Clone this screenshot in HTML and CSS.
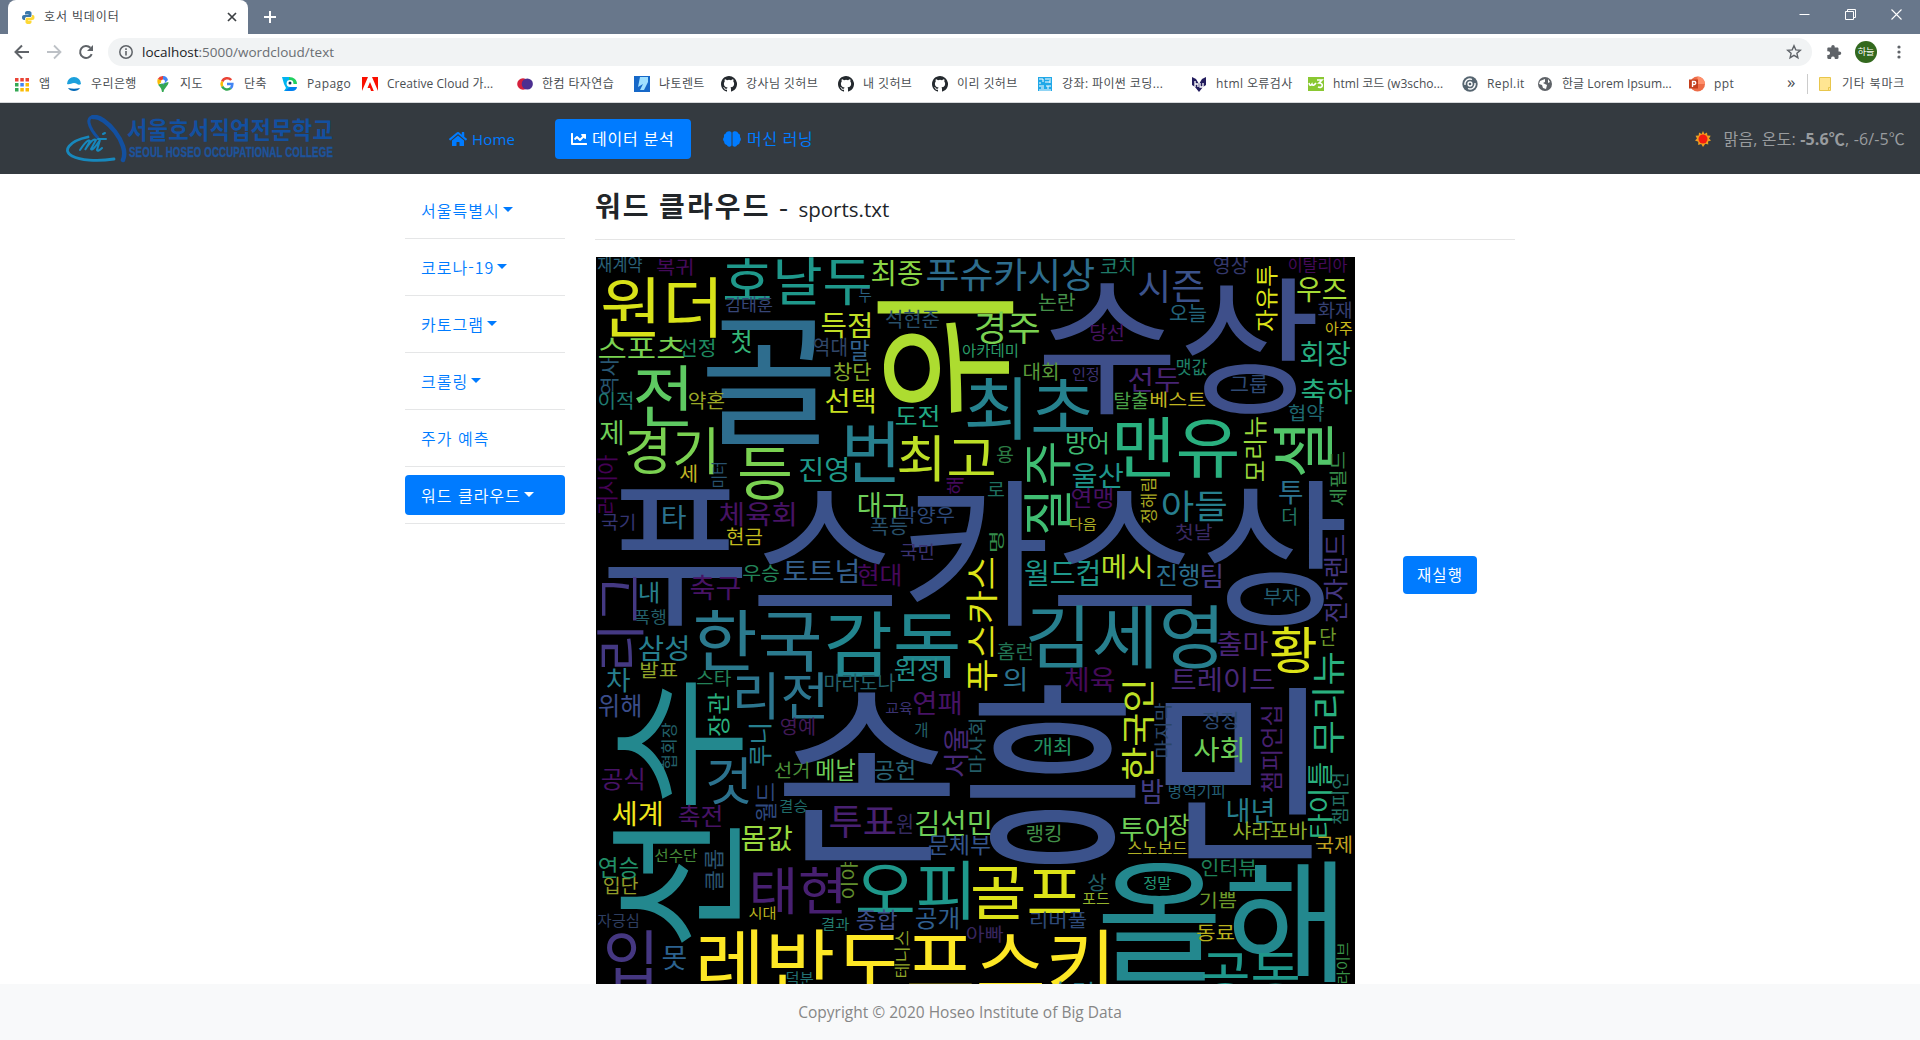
FILE: index.html
```html
<!DOCTYPE html>
<html lang="ko">
<head>
<meta charset="utf-8">
<title>호서 빅데이터</title>
<link rel="stylesheet" href="styles.css">
</head>
<body>
<svg width="0" height="0" class="defs">
  <symbol id="github" viewBox="0 0 16 16"><path fill="#24292e" d="M8 0C3.58 0 0 3.58 0 8c0 3.54 2.29 6.53 5.47 7.59.4.07.55-.17.55-.38v-1.49c-2.23.48-2.69-.95-2.69-.95-.36-.92-.89-1.17-.89-1.17-.73-.5.05-.49.05-.49.81.06 1.23.83 1.23.83.72 1.23 1.88.88 2.34.67.07-.52.28-.88.51-1.08-1.78-.2-3.65-.89-3.65-3.95 0-.87.31-1.59.82-2.15-.08-.2-.36-1.02.08-2.12 0 0 .67-.21 2.2.82a7.6 7.6 0 0 1 4 0c1.53-1.03 2.2-.82 2.2-.82.44 1.1.16 1.92.08 2.12.51.56.82 1.28.82 2.15 0 3.07-1.87 3.75-3.65 3.95.29.25.54.73.54 1.48v2.2c0 .21.15.46.55.38A8 8 0 0 0 8 0z"/></symbol>
</svg>
<div class="tabstrip">
  <div class="tab">
    <svg width="14" height="14" viewBox="0 0 14 14"><path fill="#3c78aa" d="M7 1c-2 0-3 .6-3 2v1.500h3.500V5H3C1.500 5 1 6 1 7.500S1.800 10 3 10h1V8.500C4 7.500 5 7 6 7h3c1 0 1.500-.7 1.500-1.500V3C10.500 1.500 9 1 7 1z"/><path fill="#fdd835" d="M7.500 14c2 0 3-.6 3-2v-1.500H7V10h4c1.600 0 2.500-.8 2.500-2.500S13 5 11.500 5H11v1c0 1.200-.8 1.800-2 1.800H6c-1 0-1.500.7-1.500 1.500V12c0 1.400 1 2 3 2z"/></svg>
    <span class="tab-title">호서 빅데이터</span>
    <svg class="tab-close" width="10" height="10" viewBox="0 0 10 10"><path d="M1 1l8 8M9 1l-8 8" stroke="#3c4043" stroke-width="1.7"/></svg>
  </div>
  <svg class="newtab" width="12" height="12" viewBox="0 0 12 12"><path d="M6 0v12M0 6h12" stroke="#fff" stroke-width="2"/></svg>
  <div class="winbtns">
    <svg width="11" height="11" viewBox="0 0 11 11"><path d="M.5 5.500h10" stroke="#fff"/></svg>
    <svg width="11" height="11" viewBox="0 0 11 11"><path d="M2.500 2.500v-2h8v8h-2M.5 2.500h8v8h-8z" fill="none" stroke="#fff"/></svg>
    <svg width="11" height="11" viewBox="0 0 11 11"><path d="M.5.5l10 10M10.500.5l-10 10" stroke="#fff" stroke-width="1.100"/></svg>
  </div>
</div>
<div class="toolbar">
  <div class="navbtns">
    <svg width="16" height="16" viewBox="0 0 16 16"><path d="M15 8H2M8 1.500L1.500 8 8 14.500" fill="none" stroke="#5f6368" stroke-width="2"/></svg>
    <svg width="16" height="16" viewBox="0 0 16 16"><path d="M1 8h13M8 1.500L14.500 8 8 14.500" fill="none" stroke="#bdc1c6" stroke-width="1.800"/></svg>
    <svg width="16" height="16" viewBox="0 0 16 16"><path d="M13.700 10.200A6 6 0 1 1 12.400 3.800" fill="none" stroke="#5f6368" stroke-width="2"/><path d="M15 1v6H9z" fill="#5f6368"/></svg>
  </div>
  <div class="url">
    <svg width="14" height="14" viewBox="0 0 14 14"><circle cx="7" cy="7" r="6.200" fill="none" stroke="#5f6368" stroke-width="1.500"/><path d="M7 6v4.500M7 3.300v1.600" stroke="#5f6368" stroke-width="1.600"/></svg>
    <span class="addr">localhost<span class="path">:5000/wordcloud/text</span></span>
    <svg width="16" height="16" viewBox="0 0 16 16"><path d="M8 1.800l1.800 4.100 4.500.4-3.400 3 1 4.400L8 11.400l-3.900 2.300 1-4.400-3.400-3 4.500-.4z" fill="none" stroke="#5f6368" stroke-width="1.400"/></svg>
  </div>
  <svg class="ext" width="16" height="16" viewBox="0 0 16 16"><path fill="#5f6368" d="M13.500 7.500h-1V4.700c0-.7-.6-1.200-1.200-1.200H8.700V2.600a1.700 1.700 0 0 0-3.400 0v.9H2.500c-.7 0-1.200.5-1.200 1.200v2.500h.9a1.900 1.900 0 0 1 0 3.800h-.9v2.700c0 .7.500 1.200 1.200 1.200h2.600v-.9a1.900 1.900 0 0 1 3.700 0v.9h2.500c.7 0 1.200-.5 1.200-1.200V11h1a1.750 1.750 0 0 0 0-3.500z"/></svg>
  <span class="avatar">하늘</span>
  <svg class="dots" width="4" height="14" viewBox="0 0 4 14" fill="#5f6368"><circle cx="2" cy="2" r="1.600"/><circle cx="2" cy="7" r="1.600"/><circle cx="2" cy="12" r="1.600"/></svg>
</div>
<div class="bookmarks">
  <div class="marks">
    <span class="bm"><svg viewBox="0 0 16 16"><g fill="#ea4335"><path d="M1 2h3.500v3.500H1z"/><path d="M6.300 2h3.500v3.500H6.300zM11.500 2H15v3.500h-3.500z"/></g><path fill="#34a853" d="M1 7h3.500v3.500H1zM1 12h3.500v3.500H1z"/><path fill="#4285f4" d="M6.300 7h3.500v3.500H6.300z"/><path fill="#fbbc05" d="M11.500 7H15v3.500h-3.500zM6.300 12h3.500v3.500H6.300zM11.500 12H15v3.500h-3.500z"/></svg>앱</span>
    <span class="bm"><svg viewBox="0 0 16 16"><path fill="#1ca0dc" d="M1 8a7 7 0 0 1 14 0c-3 2-4-1-7-1S4 9 1 8z"/><path fill="#0068b7" d="M2 12c4 1 8 1 12 0-2 4-10 4-12 0z"/></svg>우리은행</span>
    <span class="bm"><svg viewBox="0 0 16 16"><path fill="#34a853" d="M3 8.500C5 11 6.500 12 7 16h1.500c.5-4 5-6 5-10z"/><path fill="#4285f4" d="M7 0a5.500 5.500 0 0 1 6 4L8 9z"/><path fill="#ea4335" d="M8 0a6 6 0 0 0-5.300 3L8 6z"/><path fill="#fbbc05" d="M2.700 3c-.6 2-.4 4 .5 5.700L8 5z"/><circle cx="8" cy="5.500" r="2" fill="#fff"/></svg>지도</span>
    <span class="bm"><svg viewBox="0 0 16 16" fill="none" stroke-width="2.600"><path stroke="#ea4335" d="M12.200 4A5.400 5.400 0 0 0 3.200 5.500"/><path stroke="#fbbc05" d="M3.200 5.500a5.400 5.400 0 0 0 0 5"/><path stroke="#34a853" d="M3.200 10.500a5.400 5.400 0 0 0 8.500 1.600"/><path stroke="#4285f4" d="M8 8h5.300c0 2-.5 3.200-1.600 4.200"/></svg>단축</span>
    <span class="bm"><svg viewBox="0 0 16 16"><path fill="#00b4f0" d="M0 1h8v14H2l2-3-2-4z"/><path fill="#20d060" d="M7 1c5 0 8 3 8 7h-4c-3 0-4-3-4-7z"/><path fill="#0080f0" d="M3 15h7c3 0 5-2 5-4H8z"/><circle cx="8" cy="7.500" r="3.400" fill="#fff"/><circle cx="8" cy="7" r="1.500" fill="#07345a"/></svg>Papago</span>
    <span class="bm"><svg viewBox="0 0 16 16"><path fill="#fa0f00" d="M0 1h6L0 15zM16 1h-6l6 14zM8 6l3.800 9H9l-1-3H5.500z"/></svg>Creative Cloud 가...</span>
    <span class="bm"><svg viewBox="0 0 16 16"><circle cx="6" cy="8" r="5.800" fill="#d5203c"/><circle cx="10.300" cy="8" r="5.600" fill="#4c2f91"/></svg>한컴 타자연습</span>
    <span class="bm"><svg viewBox="0 0 16 16"><path fill="#1668c8" d="M0 0h16v16H0z"/><path fill="#9fe0ff" d="M6 1l8 0v5l-4 8H6l3-6-5 3z"/></svg>냐토렌트</span>
    <span class="bm"><svg><use href="#github"/></svg>강사님 깃허브</span>
    <span class="bm"><svg><use href="#github"/></svg>내 깃허브</span>
    <span class="bm"><svg><use href="#github"/></svg>이리 깃허브</span>
    <span class="bm"><svg viewBox="0 0 16 16"><path fill="#20a8e8" d="M1 1h14v14H1z"/><path d="M2 3h4v3M3 6v2M8 3h4M8 6h5M13 2v5M2 10h5M4 12h3M9 10h5M11 10v3M2 14h12" stroke="#fff" fill="none"/></svg>강좌: 파이썬 코딩...</span>
    <span class="bm"><svg viewBox="0 0 16 16"><path fill="#241d5e" d="M1 1l4 2 3 5 3-5 4-2v8l-3 2-4 5-4-5-3-2z"/><path d="M4 5v6M4 8h3v3M9 7v4h3V7" fill="none" stroke="#fff" stroke-width="1.300"/></svg>html 오류검사</span>
    <span class="bm"><svg viewBox="0 0 16 16"><path fill="#8ac832" d="M0 1h16v14H0z"/><path d="M1 7q1 4 3 1 1 3 4-1M9 4h5l-3 3c5 0 4 6-1 4" fill="none" stroke="#fff" stroke-width="1.600"/></svg>html 코드 (w3scho...</span>
    <span class="bm"><svg viewBox="0 0 16 16"><circle cx="8" cy="8" r="7.700" fill="#566570"/><circle cx="8" cy="8" r="2" fill="none" stroke="#fff" stroke-width="1.300"/><path d="M3 9a5 5 0 0 1 7-5.500M13 7a5 5 0 0 1-7 5.500" fill="none" stroke="#fff" stroke-width="1.300"/></svg>Repl.it</span>
    <span class="bm"><svg viewBox="0 0 16 16"><circle cx="8" cy="8" r="7" fill="#5f6368"/><path fill="#fff" d="M3 5l5-2v3L6 7l4 2-1 4-3-1-1-3-3-1zM11 3l2 3-2 1z"/></svg>한글 Lorem Ipsum...</span>
    <span class="bm"><svg viewBox="0 0 16 16"><circle cx="8.500" cy="8" r="7.500" fill="#ed6c47"/><path fill="#ff8f6b" d="M8.500.5A7.500 7.500 0 0 1 16 8H8.500z"/><path fill="#c43e1c" d="M0 3.500h9v9H0z"/><path d="M3.500 11V5.500h1.800a1.500 1.500 0 0 1 0 3H3.500" fill="none" stroke="#fff" stroke-width="1.300"/></svg>ppt</span>
  </div>
  <span class="more">»</span>
  <span class="bm other"><svg viewBox="0 0 16 16"><path d="M2.500 1.500h11v13h-11z" fill="#ffe592" stroke="#e8c64c"/><path d="M11.500 14.500v-3h2" fill="none" stroke="#e8c64c"/></svg>기타 북마크</span>
</div>

<nav class="navbar">
  <svg class="logo" width="268" height="48" viewBox="0 0 268 48">
    <g fill="none" stroke-linecap="round"><path d="M32 23C22 12 20 2 27 2" stroke="#1350a0" stroke-width="3"/><path d="M27 2c12-2 37 27 30 43" stroke="#1350a0" stroke-width="4.500"/><path d="M22 22C3 26-4 36 6 41c8 4 24 6 42 3" stroke="#1788bd" stroke-width="2.800"/><path d="M14 35q8-12 10-9l-5 9q8-13 11-10l-5 9q1 3 9-9l-3 10q1 2 5-2M32 24h8M37 19l2-1" stroke="#1788bd" stroke-width="2"/></g>
    <text class="logo-ko" x="61" y="24" textLength="206" lengthAdjust="spacingAndGlyphs">서울호서직업전문학교</text>
    <text class="logo-en" x="63" y="42" textLength="204" lengthAdjust="spacingAndGlyphs">SEOUL HOSEO OCCUPATIONAL COLLEGE</text>
  </svg>
  <a class="nav home"><svg width="18" height="16" viewBox="0 0 576 512"><path fill="currentColor" d="M280 148L96 300v164a16 16 0 0 0 16 16h112a16 16 0 0 0 16-16v-96a16 16 0 0 1 16-16h64a16 16 0 0 1 16 16v96a16 16 0 0 0 16 16h112a16 16 0 0 0 16-16V300L296 148a12 12 0 0 0-16 0zM572 251l-84-69V44a12 12 0 0 0-12-12h-56a12 12 0 0 0-12 12v72l-90-74a48 48 0 0 0-61 0L4 251a12 12 0 0 0-1 17l25 31a12 12 0 0 0 17 2l235-194a12 12 0 0 1 16 0l235 194a12 12 0 0 0 17-2l25-31a12 12 0 0 0-1-17z"/></svg>Home</a>
  <a class="nav active"><svg width="16" height="16" viewBox="0 0 512 512"><path fill="currentColor" d="M496 384H64V80a16 16 0 0 0-16-16H16A16 16 0 0 0 0 80v336a32 32 0 0 0 32 32h464a16 16 0 0 0 16-16v-32a16 16 0 0 0-16-16zM464 96H346c-22 0-32 26-17 41l32 32-73 73-73-73a32 32 0 0 0-46 0l-68 68a16 16 0 0 0 0 23l23 22a16 16 0 0 0 22 0l46-45 73 73a32 32 0 0 0 46 0l96-96 32 32c15 15 41 5 41-17V112a16 16 0 0 0-16-16z"/></svg>데이터 분석</a>
  <a class="nav ml"><svg width="18" height="16" viewBox="0 0 18 16"><path fill="currentColor" d="M8.500 1.500v13C7 16.300 4.500 16 4 14 1.500 13.500 1 12 1.300 10.700-.3 9.500-.2 7 1.100 6 .5 4.300 1.500 3 2.800 2.600 3.300.2 7-.5 8.500 1.500zM9.500 1.500v13c1.500 1.800 4 1.500 4.500-.5 2.500-.5 3-2 2.700-3.300C18.300 9.500 18.200 7 16.900 6c.6-1.700-.4-3-1.700-3.400C14.700.2 11 -.5 9.500 1.500z"/></svg>머신 러닝</a>
  <div class="weather"><svg width="16" height="16" viewBox="0 0 16 16"><path fill="#f0a020" d="M8 0l1.400 3L12 1.500l.4 3.100 3.300.1L14 7.500l2 2-3 1 .3 3-3-.7L8 16l-1.800-3-3 1 .1-3.300L0 9.500l2-2L.5 4.800l3.200-.2L4 1.500 6.600 3z"/><circle cx="8" cy="8" r="4.500" fill="#f41c10"/></svg><span>맑음, 온도: <b>-5.6℃</b>, -6/-5℃</span></div>
</nav>

<main class="content">
  <aside class="side">
    <div class="item"><a class="caret">서울특별시</a></div>
    <div class="item"><a class="caret">코로나-19</a></div>
    <div class="item"><a class="caret">카토그램</a></div>
    <div class="item"><a class="caret">크롤링</a></div>
    <div class="item"><a>주가 예측</a></div>
    <div class="item"><a class="caret current">워드 클라우드</a></div>
  </aside>
  <section class="panel">
    <h3>워드 클라우드 <span class="dash">-</span> <small>sports.txt</small></h3>
    <div class="row">
      <svg class="cloud" id="cloud" width="759" height="759" viewBox="0 0 759 759"></svg>
      <button class="rerun">재실행</button>
    </div>
  </section>
</main>
<footer>Copyright © 2020 Hoseo Institute of Big Data</footer>
<script src="cloud.js"></script>
</body>
</html>
```
FILE: styles.css
```css
* { box-sizing: border-box; }
body {
  margin: 0;
  height: 1040px;
  overflow: hidden;
  display: flex;
  flex-direction: column;
  background: #fff;
  color: #212529;
  font: 300 16px/24px "Open Sans", "Noto Sans CJK KR", sans-serif;
}
svg { display: block; flex: none; }
.defs { position: absolute; }

.tabstrip { flex: none; height: 34px; background: #68778b; display: flex; align-items: center; padding-left: 8px; }
.tab { width: 240px; height: 34px; background: #fff; border-radius: 8px 8px 0 0; display: flex; align-items: center; padding: 0 11px 0 13px; font-size: 12px; font-weight: 400; color: #45494d; }
.tab-title { margin-left: 9px; letter-spacing: .9px; flex: 1; }
.newtab { margin-left: 16px; }
.winbtns { margin-left: auto; display: flex; gap: 35px; padding-right: 18px; margin-top: -6px; }

.toolbar { flex: none; height: 36px; display: flex; align-items: center; }
.navbtns { display: flex; gap: 16px; width: 108px; padding-left: 14px; }
.url { width: 1704px; height: 28px; border-radius: 14px; background: #f1f3f4; display: flex; align-items: center; padding: 0 10px 0 11px; }
.addr { flex: 1; margin-left: 9px; font-size: 13.500px; font-weight: 400; color: #202124; }
.path { color: #6a6e73; }
.ext { margin-left: 14px; }
.avatar { width: 22px; height: 22px; border-radius: 50%; background: #33691e; color: #fff; font-size: 9px; line-height: 21px; text-align: center; margin-left: 13px; font-weight: 400; }
.dots { margin-left: 20px; }

.bookmarks { flex: none; height: 33px; border-bottom: 1px solid #d5d7da; display: flex; align-items: center; padding: 0 0 5px 14px; font-size: 12px; font-weight: 400; color: #4a4e52; }
.marks { display: grid; width: 1773px; grid-template-columns: 52px 89px 64px 63px 80px 155px 117px 87px 117px 94px 105px 154px 117px 154px 75px 152px 60px; }
.bm { display: flex; align-items: center; white-space: pre; letter-spacing: .4px; }
.bm svg { width: 16px; height: 16px; margin-right: 9px; }
.bm:nth-child(6), .bm:nth-child(14), .bm:nth-child(16) { letter-spacing: .05px; }
.more { width: 20px; font-size: 17px; margin-top: -3px; }
.other { border-left: 1px solid #ccc; padding-left: 9px; height: 20px; letter-spacing: .8px; }

.navbar { flex: none; height: 71px; background: #343a40; display: flex; align-items: center; color: #007bff; letter-spacing: .2px; }
.logo { margin-left: 66px; }
.logo-ko { font: 700 24px "Noto Sans CJK KR", sans-serif; fill: #1350a0; }
.logo-en { font: 700 14px "Liberation Sans", sans-serif; fill: #1e539b; stroke: #1e539b; stroke-width: .4px; }
.nav { display: flex; align-items: center; gap: 5px; font-weight: 400; font-size: 15px; }
.nav.home { margin-left: 115px; width: 106px; }
.nav.active { width: 136px; height: 40px; border-radius: 4px; background: #007bff; color: #fff; padding-left: 16px; gap: 5px; font-weight: 400; font-size: 16px; letter-spacing: .8px; }
.nav.ml { margin-left: 32px; gap: 6px; font-size: 16px; letter-spacing: .7px; }
.weather { margin-left: auto; padding-right: 15px; display: flex; align-items: center; gap: 13px; color: #999c9f; font-weight: 400; font-size: 16px; letter-spacing: .15px; }
.weather b { font-weight: 700; }

.content { flex: 1; min-height: 0; display: flex; padding-left: 405px; gap: 30px; }
.side { width: 160px; padding-top: 8px; }
.item { height: 57px; padding-top: 8px; border-bottom: 1px solid #e5e6e7; }
.item a { display: flex; align-items: center; height: 40px; padding: 0 0 1px 16px; border-radius: 4px; color: #007bff; font-family: "Noto Sans CJK KR", sans-serif; font-size: 16px; letter-spacing: 1px; font-weight: 350; }
.item .current { background: #007bff; color: #fff; }
.caret::after { content: ""; margin-left: 3px; border: 5px solid transparent; border-top-color: currentColor; border-bottom: 0; }
.panel { width: 920px; }
h3 { margin: 0 0 17px; height: 66px; border-bottom: 1px solid #e5e5e5; font-size: 28px; line-height: 65px; font-weight: 700; letter-spacing: 2.100px; white-space: pre; word-spacing: -1px; }
h3 .dash { font-weight: 400; }
h3 small { font-size: 20.500px; font-weight: 400; letter-spacing: 0; }
.row { display: flex; padding-left: 1px; }
.cloud { background: #000; font: 400 100px "Noto Sans CJK KR", sans-serif; }
.rerun { margin: 299px 0 0 48px; width: 74px; height: 38px; border: 0; border-radius: 4px; background: #007bff; color: #fff; font: 400 15.500px "Noto Sans CJK KR", sans-serif; letter-spacing: 1px; padding: 0 0 2px; }
footer { flex: none; height: 56px; background: #f8f9fa; color: #868686; text-align: center; line-height: 56px; font-weight: 400; font-size: 15.500px; position: relative; }
```
FILE: cloud.js
```js
// word, left, top, right, bottom of the inked area, colour, 1 = turned upwards
const words = [
['재계약',2,0,46,16,'#2a6078'],['복귀',61,2,96,19,'#440a5a'],['원더',7,20,120,81,'#d8e219'],['호날두',129,0,274,48,'#1f988b'],
['최종',276,4,326,30,'#8bd646'],['푸슈카시상',331,1,498,34,'#2e6d8e'],['두',263,31,275,45,'#2b6080'],['김태훈',130,40,176,56,'#374677'],
['골',111,62,235,187,'#2e6d8e'],['득점',226,56,274,82,'#c0df25'],['위',280,43,418,157,'#addc30',1],['스포츠',3,80,88,101,'#7ad151'],
['선정',84,82,118,101,'#1f8a60'],['첫',136,73,155,96,'#35b779'],['역대',218,81,250,100,'#304668'],['말',255,83,273,104,'#33638d'],
['석현준',290,53,343,72,'#29506a'],['역사',5,101,23,137,'#285672',1],['전',40,108,92,169,'#5ec962'],['창단',238,106,275,125,'#86a82a'],
['이적',3,135,36,153,'#1f7a70'],['약혼',93,135,128,153,'#9aa826'],['선택',230,131,278,156,'#c8e020'],['도전',300,148,342,169,'#22a884'],
['제',4,163,26,188,'#6ece58'],['경기',31,170,118,218,'#7ad151'],['세',84,208,100,226,'#c2b424'],['미터',115,206,130,230,'#28526e',1],
['등',144,191,194,243,'#7ad151'],['진영',204,200,251,225,'#1f9a8a'],['번',251,164,299,225,'#277f8e'],['최고',303,178,398,225,'#bddf26'],
['러시아',1,198,21,256,'#440154',1],['해',351,221,368,237,'#440a5a',1],['코치',505,1,538,19,'#1f7a68'],['시즌',543,13,607,46,'#3b528b'],
['수상',448,20,720,158,'#3e4f8a'],['영상',618,0,652,18,'#34386c'],['자유투',660,9,681,74,'#dde318',1],['이탈리아',693,0,751,15,'#440a5a'],
['우즈',701,21,750,46,'#a5db36'],['화재',722,45,755,62,'#343f70'],['아주',730,64,756,78,'#c8b81c'],['논란',443,36,479,54,'#45904a'],
['경주',380,55,443,87,'#7ad151'],['당선',495,67,527,85,'#471360'],['오늘',574,47,610,65,'#23647a'],['아카데미',367,86,421,100,'#2a9c68'],
['회장',705,84,754,109,'#28ae80'],['대회',428,106,461,124,'#5a9a3a'],['인정',477,110,502,124,'#3c3272'],['선두',533,110,583,135,'#482475'],
['맷값',581,101,611,118,'#1f8068'],['그룹',635,118,671,136,'#2f4a74'],['축하',706,122,756,147,'#28ae80'],['최초',371,120,497,183,'#26828e'],
['탈출',519,135,552,153,'#4aa048'],['베스트',555,135,609,151,'#c0b420'],['협약',693,148,728,165,'#1f6a72'],['맨유',521,160,641,221,'#2ab07f'],
['모리뉴',648,160,670,224,'#9bd93c',1],['셜',677,169,735,218,'#52c569',1],['방어',471,175,511,197,'#3fbc73'],['용',401,190,417,207,'#2c7c44'],
['울산',477,206,527,231,'#1f958b'],['질주',428,186,474,276,'#40bd72',1],['로',392,225,408,239,'#1f7060'],['연맹',476,231,516,251,'#471063'],
['정해림',545,222,561,266,'#a8a822',1],['아들',567,233,630,265,'#277f8e'],['투',683,224,706,247,'#2c728e'],['셰필드',734,195,751,249,'#358a48',1],
['푸스카스상',11,222,749,370,'#3b528b'],['국기',6,257,38,274,'#343470'],['타',67,248,90,272,'#2c728e'],['체육회',124,245,198,269,'#471365'],
['현금',131,270,166,288,'#c0b81e'],['대구',263,236,310,262,'#6ece58'],['박양우',303,250,358,267,'#2c4878'],['폭등',275,261,311,279,'#28506a'],
['국민',305,287,337,304,'#3a3270'],['우승',147,308,183,325,'#238458'],['토트넘',188,302,261,326,'#35608d'],['현대',262,307,304,329,'#46085c'],
['리그',1,320,47,410,'#443983',1],['내',44,325,62,346,'#277f8e'],['축구',95,318,144,343,'#471365'],['폭행',39,352,69,367,'#235e68'],
['한국',100,353,223,415,'#2b7a8e'],['감독',231,353,362,420,'#22858e'],['삼성',43,378,91,404,'#277f8e'],['발표',45,404,81,421,'#90a42a'],
['차',11,411,34,435,'#277f8e'],['스타',101,413,135,430,'#238058'],['원정',299,401,341,424,'#22918c'],['마라도나',229,417,299,435,'#23606a'],
['리전',141,415,228,463,'#2c758e'],['위해',3,437,44,460,'#3b4d8a'],['장관',112,436,133,479,'#2ab07f',1],['협회장',65,466,80,512,'#23606a',1],
['루니',153,468,175,509,'#277f8e',1],['영예',185,461,218,479,'#421a58'],['교육',290,445,316,457,'#3a3270'],['연패',318,434,364,458,'#471365'],
['개',319,465,331,480,'#236068'],['마사회',373,463,390,515,'#235c66',1],['서울',348,471,372,520,'#482878',1],['손흥민',188,427,716,610,'#3b528b'],
['푸스카스',370,301,401,434,'#dde318',1],['선수',16,425,148,686,'#23888e',1],['다음',474,260,500,273,'#acac24'],['첫날',580,266,616,283,'#3a2a64'],
['더',687,251,700,269,'#237462'],['명',393,276,407,294,'#348a4a',1],['월드컵',429,303,502,329,'#1f988b'],['메시',507,297,554,322,'#b5de2b'],
['진행',561,307,602,329,'#2c6f8e'],['팀',606,307,625,331,'#443983'],['부자',668,331,704,349,'#235e70'],['전자랜드',728,278,751,365,'#453781',1],
['김세영',433,348,621,412,'#277f8e'],['홈런',402,385,436,403,'#227454'],['출마',622,374,672,399,'#482475'],['황',675,370,720,416,'#dde318'],
['단',725,371,740,389,'#6c982a'],['무리뉴',716,396,748,496,'#2ab07f',1],['의',408,410,429,434,'#2c728e'],['체육',469,410,518,435,'#440a5a'],
['트레이드',576,410,678,435,'#482878'],['한국인',526,425,558,522,'#bddf26',1],['마지막',559,446,576,500,'#2b4668',1],['정정',607,455,641,473,'#2e4a72'],
['챔피언십',665,450,686,535,'#482070',1],['개최',438,481,474,499,'#229060'],['사회',598,480,646,505,'#6ece58'],['밤',546,522,567,547,'#433e85'],
['병역기피',573,527,628,541,'#235e74'],['타이틀',712,506,736,580,'#2ab07f',1],['챔피언',736,517,753,567,'#237064',1],['내년',632,541,677,566,'#277f8e'],
['샤라포바',637,565,711,583,'#90b02c'],['국제',720,579,755,597,'#c0a020'],['랭킹',431,568,464,586,'#429048'],['투어',524,560,571,584,'#6ece58'],
['장',573,557,593,578,'#7ad151'],['스노보드',532,585,591,597,'#b0b024'],['인터뷰',606,602,660,620,'#1f8058'],['올해',507,603,740,726,'#23888e'],
['정말',548,619,575,632,'#229874'],['상',492,617,510,635,'#236068'],['포드',487,636,513,647,'#94b42c'],['기쁨',604,635,640,652,'#6c982a'],
['동료',601,668,638,685,'#b8b01e'],['골프',377,610,484,662,'#dde318'],['리버풀',435,655,490,672,'#2e4a78'],['아빠',371,669,407,686,'#38265e'],
['공동',607,696,702,744,'#1f988b'],['라이브',740,686,753,726,'#389048',1],['레반도프스키',104,672,511,741,'#fde725'],['훈련',454,725,497,748,'#277f8e'],
['김선민',320,553,394,579,'#6ece58'],['문체부',333,578,394,598,'#34558b'],['테니스',298,674,313,720,'#90a42a',1],['이야',245,605,262,641,'#628e2e',1],
['오피',262,604,373,663,'#1f988b'],['공개',320,650,362,672,'#2f5f8e'],['종합',261,653,301,673,'#3e4f8a'],['결과',226,660,253,673,'#237c70'],
['태현',157,610,246,658,'#482071'],['시대',153,649,179,662,'#b8b01e'],['덕분',191,714,217,728,'#237070'],['못',67,689,90,713,'#2c628e'],
['입',11,673,56,736,'#453781'],['자긍심',2,656,42,670,'#2e3e60'],['입단',8,619,42,637,'#909a28'],['연승',3,600,42,621,'#229068'],
['선수단',59,591,101,605,'#468a3a'],['클롭',109,593,127,633,'#2c5672',1],['몸값',146,568,196,594,'#98d83e'],['세계',17,544,65,569,'#f0e51c'],
['축전',83,548,125,570,'#471365'],['공식',6,511,47,533,'#471365'],['것',112,500,153,547,'#2c728e'],['월드',160,526,180,564,'#2f4a80',1],
['결승',184,542,211,555,'#1f6c6a'],['선거',179,505,212,522,'#4c9038'],['메날',221,502,259,524,'#6ece58'],['공헌',279,503,318,523,'#2a6474'],
['투표',234,549,299,581,'#482071'],['원',301,557,316,576,'#342a60']
];

const cloud = document.getElementById('cloud');
const ctx = document.createElement('canvas').getContext('2d');
ctx.font = '400 100px "Noto Sans CJK KR", sans-serif';

for (const [text, x0, y0, x1, y1, color, up] of words) {
  const m = ctx.measureText(text);
  const inkW = m.actualBoundingBoxLeft + m.actualBoundingBoxRight;
  const inkH = m.actualBoundingBoxAscent + m.actualBoundingBoxDescent;
  const w = up ? y1 - y0 : x1 - x0;
  const h = up ? x1 - x0 : y1 - y0;
  const place = up ? `translate(${x0} ${y1}) rotate(-90)` : `translate(${x0} ${y0})`;
  const el = document.createElementNS('http://www.w3.org/2000/svg', 'text');
  el.setAttribute('transform', `${place} scale(${w / inkW} ${h / inkH}) translate(${m.actualBoundingBoxLeft} ${m.actualBoundingBoxAscent})`);
  el.setAttribute('fill', color);
  el.textContent = text;
  cloud.appendChild(el);
}
```
